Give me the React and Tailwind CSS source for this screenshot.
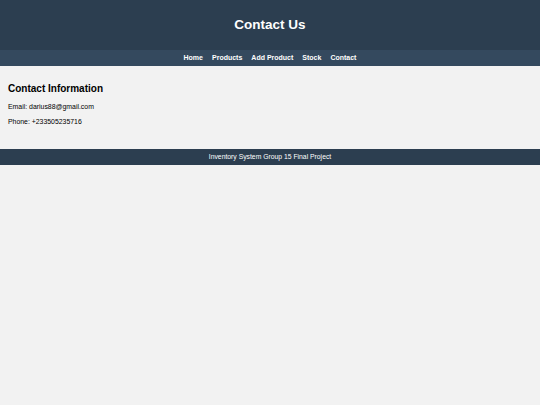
import React from 'react';

const links = ['Home', 'Products', 'Add Product', 'Stock', 'Contact'];

export default function App() {
  return (
    <div className="min-h-[405px] bg-[#f2f2f2] font-['Liberation_Sans',Arial,sans-serif]">
      <header className="h-[50px] bg-[#2c3e50] flex items-center justify-center">
        <h1 className="text-[13.5px] font-bold text-white">Contact Us</h1>
      </header>
      <nav className="h-[16px] bg-[#34495e] flex items-center justify-center gap-[9px]">
        {links.map(l => (
          <a key={l} href="#" className="text-[7px] font-bold text-white">{l}</a>
        ))}
      </nav>
      <section className="px-[8px] pt-[18px] h-[83px]">
        <h2 className="text-[10px] font-bold text-black leading-none">Contact Information</h2>
        <p className="text-[6.9px] text-black mt-[10px] leading-none">Email: darius88@gmail.com</p>
        <p className="text-[6.9px] text-black mt-[8px] leading-none">Phone: +233505235716</p>
      </section>
      <footer className="h-[16px] bg-[#2c3e50] flex items-center justify-center">
        <p className="text-[6.8px] text-white">Inventory System Group 15 Final Project</p>
      </footer>
    </div>
  );
}
